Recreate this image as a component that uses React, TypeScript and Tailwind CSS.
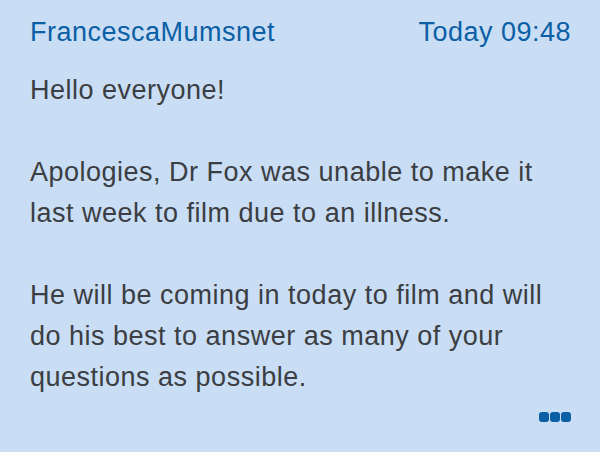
export default function App() {
  return (
    <div className="w-[600px] h-[452px] bg-[#c9ddf5] pl-[30px] pr-[29px] pt-[14px] font-['Liberation_Sans',Arial,sans-serif] tracking-[0.5px] overflow-hidden">
      <div className="flex justify-between items-baseline text-[27px] text-[#0b5fa5] leading-[36px]">
        <span>FrancescaMumsnet</span>
        <span>Today 09:48</span>
      </div>
      <div className="mt-[20px] text-[27px] leading-[41px] text-[#3b3e42]">
        <p>Hello everyone!</p>
        <p className="mt-[41px]">
          Apologies, Dr Fox was unable to make it
          <br />
          last week to film due to an illness.
        </p>
        <p className="mt-[41px]">
          He will be coming in today to film and will
          <br />
          do his best to answer as many of your
          <br />
          questions as possible.
        </p>
      </div>
      <div className="flex justify-end gap-[1px] mt-[14px]">
        <span className="w-[10px] h-[10px] rounded-[3px] bg-[#0b5fa5]" />
        <span className="w-[10px] h-[10px] rounded-[3px] bg-[#0b5fa5]" />
        <span className="w-[10px] h-[10px] rounded-[3px] bg-[#0b5fa5]" />
      </div>
    </div>
  );
}
